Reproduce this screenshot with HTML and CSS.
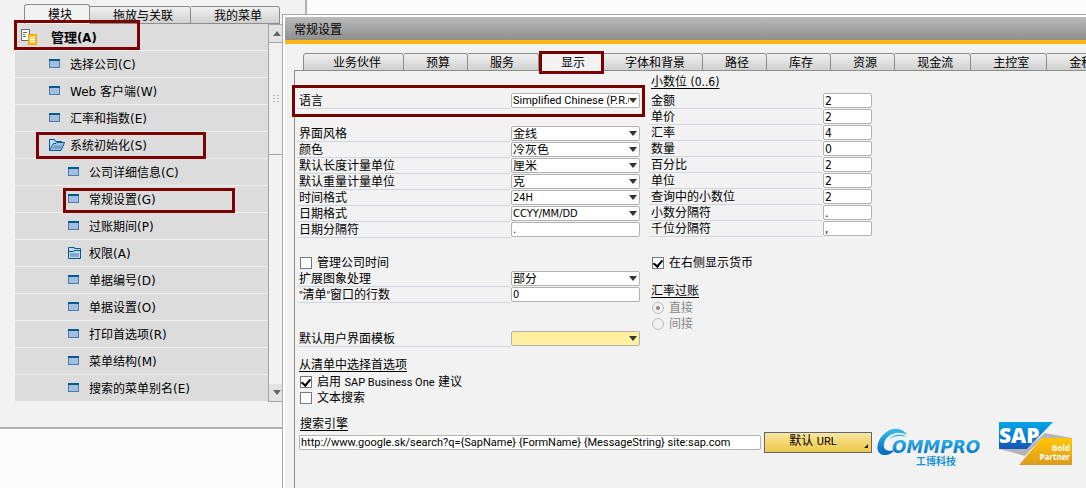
FILE: index.html
```html
<!DOCTYPE html>
<html lang="zh-CN">
<head>
    <meta charset="UTF-8">
    <title>常规设置</title>
    <link rel="stylesheet" href="styles.css">
</head>
<body>

<!-- icons used in the menu tree -->
<svg class="sprite" aria-hidden="true">
    <symbol id="icon-window" viewBox="0 0 16 14">
        <rect x="0.5" y="2.5" width="10" height="8" fill="#a3bfdf" stroke="#4f79ac"/>
        <rect x="0" y="2" width="11" height="2" fill="#005a8c"/>
    </symbol>
    <symbol id="icon-open" viewBox="0 0 16 14">
        <path d="M0.5 12.5V1.5H5.5L6.5 3.5H12.5V5" fill="#c5d9ec" stroke="#005a8c"/>
        <path d="M0.5 12.5L4.5 5.5H7L8 4.5H15.5L12 12.5Z" fill="#a3c4e2" stroke="#005a8c"/>
        <path d="M3 11L5.5 7.5H13L11.5 11Z" fill="#6f9fcb"/>
    </symbol>
    <symbol id="icon-folder" viewBox="0 0 16 14">
        <path d="M0.5 1.5H6.5V2.5H12.5V12.5H0.5Z" fill="#c5d9ec" stroke="#005a8c"/>
        <path d="M1 5.5H5L6.5 4.5H12" fill="none" stroke="#005a8c"/>
        <rect x="2" y="7" width="9" height="4" fill="#7fa9d1"/>
    </symbol>
</svg>

<div class="desktop">
    <nav class="menu-window">
        <div class="tabs menu-tabs">
            <button class="tab active" type="button">模块</button>
            <button class="tab" type="button">拖放与关联</button>
            <button class="tab" type="button">我的菜单</button>
        </div>
        <div class="menu-body">
            <ul class="tree">
                <li class="module marked">
                    <svg width="18" height="18" viewBox="0 0 18 18">
                        <path d="M1.5 1.5H9.5V12.5H1.5Z" fill="#fff" stroke="#666"/>
                        <path d="M3 4.5H7M3 6.5H5M3 8.5H6" stroke="#666"/>
                        <rect x="8" y="6" width="9" height="11" fill="#f5a800"/>
                        <rect x="9.500" y="7.500" width="6" height="8" fill="#ffd24d"/>
                        <path d="M10 9.5H15M10 11.5H15M10 13.5H15" stroke="#fff"/>
                    </svg>
                    <a href="#">管理(A)</a>
                </li>
                <li><svg class="icon"><use href="#icon-window"/></svg><a href="#">选择公司(C)</a></li>
                <li><svg class="icon"><use href="#icon-window"/></svg><a href="#">Web 客户端(W)</a></li>
                <li><svg class="icon"><use href="#icon-window"/></svg><a href="#">汇率和指数(E)</a></li>
                <li class="marked"><svg class="icon"><use href="#icon-open"/></svg><a href="#">系统初始化(S)</a></li>
                <li class="sub"><svg class="icon"><use href="#icon-window"/></svg><a href="#">公司详细信息(C)</a></li>
                <li class="sub marked"><svg class="icon"><use href="#icon-window"/></svg><a href="#">常规设置(G)</a></li>
                <li class="sub"><svg class="icon"><use href="#icon-window"/></svg><a href="#">过账期间(P)</a></li>
                <li class="sub"><svg class="icon"><use href="#icon-folder"/></svg><a href="#">权限(A)</a></li>
                <li class="sub"><svg class="icon"><use href="#icon-window"/></svg><a href="#">单据编号(D)</a></li>
                <li class="sub"><svg class="icon"><use href="#icon-window"/></svg><a href="#">单据设置(O)</a></li>
                <li class="sub"><svg class="icon"><use href="#icon-window"/></svg><a href="#">打印首选项(R)</a></li>
                <li class="sub"><svg class="icon"><use href="#icon-window"/></svg><a href="#">菜单结构(M)</a></li>
                <li class="sub"><svg class="icon"><use href="#icon-window"/></svg><a href="#">搜索的菜单别名(E)</a></li>
            </ul>
            <div class="scrollbar">
                <div class="arrow up"></div>
                <div class="thumb">
                    <svg width="7" height="8" viewBox="0 0 7 8"><path d="M0 0.5H2M4 0.5H6M0 3.5H2M4 3.5H6M0 6.5H2M4 6.5H6" stroke="#b5b5b5"/></svg>
                </div>
                <div class="arrow down"></div>
            </div>
        </div>
    </nav>

    <main class="settings-window">
        <h1>常规设置</h1>
        <div class="tabs settings-tabs">
            <button class="tab first" type="button">业务伙伴</button>
            <button class="tab" type="button">预算</button>
            <button class="tab wide" type="button">服务</button>
            <button class="tab active marked" type="button">显示</button>
            <button class="tab" type="button">字体和背景</button>
            <button class="tab" type="button">路径</button>
            <button class="tab" type="button">库存</button>
            <button class="tab" type="button">资源</button>
            <button class="tab" type="button">现金流</button>
            <button class="tab" type="button">主控室</button>
            <button class="tab" type="button">金税</button>
        </div>

        <form class="panel">
            <div class="columns">
                <div class="left">
                    <div class="row language marked">
                        <label for="lang">语言</label>
                        <span class="pick"><select id="lang"><option>Simplified Chinese (P.R.China)</option></select></span>
                    </div>
                    <div class="row">
                        <label for="skin">界面风格</label>
                        <span class="pick cjk"><select id="skin"><option>金线</option></select></span>
                    </div>
                    <div class="row">
                        <label for="color">颜色</label>
                        <span class="pick cjk"><select id="color"><option>冷灰色</option></select></span>
                    </div>
                    <div class="row">
                        <label for="length">默认长度计量单位</label>
                        <span class="pick cjk"><select id="length"><option>厘米</option></select></span>
                    </div>
                    <div class="row">
                        <label for="weight">默认重量计量单位</label>
                        <span class="pick cjk"><select id="weight"><option>克</option></select></span>
                    </div>
                    <div class="row">
                        <label for="time">时间格式</label>
                        <span class="pick"><select id="time"><option>24H</option></select></span>
                    </div>
                    <div class="row">
                        <label for="date">日期格式</label>
                        <span class="pick"><select id="date"><option>CCYY/MM/DD</option></select></span>
                    </div>
                    <div class="row">
                        <label for="datesep">日期分隔符</label>
                        <input type="text" id="datesep" value=".">
                    </div>

                    <div class="check block">
                        <input type="checkbox" id="cotime"><label for="cotime">管理公司时间</label>
                    </div>
                    <div class="row">
                        <label for="image">扩展图象处理</label>
                        <span class="pick cjk"><select id="image"><option>部分</option></select></span>
                    </div>
                    <div class="row">
                        <label for="lines"><span class="latin">"</span>清单<span class="latin">"</span>窗口的行数</label>
                        <input type="text" id="lines" value="0">
                    </div>
                    <div class="row template">
                        <label for="template">默认用户界面模板</label>
                        <span class="pick"><select id="template"><option></option></select></span>
                    </div>

                    <h2 class="pref">从清单中选择首选项</h2>
                    <div class="check">
                        <input type="checkbox" id="suggest" checked><label for="suggest">启用 <span class="latin">SAP Business One</span> 建议</label>
                    </div>
                    <div class="check">
                        <input type="checkbox" id="textsearch"><label for="textsearch">文本搜索</label>
                    </div>
                </div>

                <div class="right">
                    <h2>小数位 (0..6)</h2>
                    <div class="row">
                        <label for="amount">金额</label>
                        <input type="text" id="amount" value="2">
                    </div>
                    <div class="row">
                        <label for="price">单价</label>
                        <input type="text" id="price" value="2">
                    </div>
                    <div class="row">
                        <label for="rate">汇率</label>
                        <input type="text" id="rate" value="4">
                    </div>
                    <div class="row">
                        <label for="qty">数量</label>
                        <input type="text" id="qty" value="0">
                    </div>
                    <div class="row">
                        <label for="percent">百分比</label>
                        <input type="text" id="percent" value="2">
                    </div>
                    <div class="row">
                        <label for="unit">单位</label>
                        <input type="text" id="unit" value="2">
                    </div>
                    <div class="row">
                        <label for="query">查询中的小数位</label>
                        <input type="text" id="query" value="2">
                    </div>
                    <div class="row">
                        <label for="decsep">小数分隔符</label>
                        <input type="text" id="decsep" value=".">
                    </div>
                    <div class="row">
                        <label for="thousep">千位分隔符</label>
                        <input type="text" id="thousep" value=",">
                    </div>

                    <div class="check block">
                        <input type="checkbox" id="currency" checked><label for="currency">在右侧显示货币</label>
                    </div>

                    <h2 class="posting">汇率过账</h2>
                    <div class="check disabled">
                        <input type="radio" name="posting" id="direct" checked disabled><label for="direct">直接</label>
                    </div>
                    <div class="check disabled">
                        <input type="radio" name="posting" id="indirect" disabled><label for="indirect">间接</label>
                    </div>
                </div>
            </div>

            <div class="bottom">
                <div class="search">
                    <h2><label for="engine">搜索引擎</label></h2>
                    <div class="search-row">
                        <input type="text" id="engine" value="http://www.google.sk/search?q={SapName} {FormName} {MessageString} site:sap.com">
                        <button class="url-button" type="button">默认 <span class="latin">URL</span></button>
                    </div>
                </div>
                <svg class="commpro" width="108" height="48" viewBox="0 0 108 48" role="img" aria-label="COMMPRO">
                    <defs>
                        <linearGradient id="blue" x1="0" y1="0" x2="0" y2="1">
                            <stop offset="0" stop-color="#35bdea"/>
                            <stop offset="1" stop-color="#0067b8"/>
                        </linearGradient>
                    </defs>
                    <path d="M31 13C26 5 15 5 8 12C-1 20 -1 33 9 33C13 33 16 31 19 28C12 30 7 28 8 22C9 14 20 7 31 13Z" fill="url(#blue)"/>
                    <path d="M13 17C18 12 25 11 31 15C25 13 18 14 13 17Z" fill="#35bdea"/>
                    <text class="commpro-name" x="16" y="31" fill="url(#blue)">OMMPRO</text>
                    <text class="commpro-sub" x="40" y="43" fill="#1494d6">工博科技</text>
                </svg>
                <svg class="sap" width="73" height="43" viewBox="0 0 73 43" role="img" aria-label="SAP Gold Partner">
                    <defs>
                        <linearGradient id="sapblue" x1="0" y1="0" x2="0" y2="1">
                            <stop offset="0" stop-color="#00a7e7"/>
                            <stop offset="1" stop-color="#1455b4"/>
                        </linearGradient>
                        <linearGradient id="gold" x1="0" y1="0" x2="0" y2="1">
                            <stop offset="0" stop-color="#ffc800"/>
                            <stop offset="1" stop-color="#dd9a20"/>
                        </linearGradient>
                    </defs>
                    <path d="M46 11L73 16H43L26 34L0 27H28Z" fill="#b5b5b7"/>
                    <path d="M0 0H54L28 27H0Z" fill="url(#sapblue)"/>
                    <path d="M43 16H73V43H20Z" fill="url(#gold)"/>
                    <text class="sap-name" x="0" y="21" fill="#fff">SAP</text>
                    <text class="sap-gold" x="71" y="29" fill="#fff">Gold</text>
                    <text class="sap-gold" x="71" y="38" fill="#fff">Partner</text>
                </svg>
            </div>
        </form>
    </main>
</div>

</body>
</html>
```
FILE: styles.css
```css
* {
    box-sizing: border-box;
}

body {
    margin: 0;
    background: #fcfcfc;
    color: #000;
    font-family: "DejaVu Sans Condensed", "Noto Sans CJK SC", sans-serif;
    font-size: 12px;
    line-height: 16px;
}

button, input, select {
    font: inherit;
    color: inherit;
    margin: 0;
}

.sprite {
    position: absolute;
    width: 0;
    height: 0;
}

.latin {
    font-family: Roboto, sans-serif;
    font-size: 11px;
}

.desktop {
    position: relative;
    min-height: 100vh;
    overflow: hidden;
}

/* dark red frames */
.marked {
    position: relative;
}

.marked::before {
    content: "";
    position: absolute;
    border: 3px solid #7b0000;
    pointer-events: none;
    z-index: 2;
}

/* tabs */
.tabs {
    display: flex;
    align-items: flex-end;
}

.tab {
    flex: none;
    height: 18px;
    padding: 1px 17px 0 22px;
    border: 1px solid #8c8c8c;
    border-left-width: 0;
    border-radius: 0 3px 0 0;
    background: linear-gradient(#f0f0f0, #d0d0d0);
    line-height: 16px;
    white-space: nowrap;
}

.tab:first-child {
    border-left-width: 1px;
    border-radius: 3px 3px 0 0;
}

.tab.active {
    background: #f2f2f2;
    border-bottom-color: #f2f2f2;
}

/* main menu */
.menu-window {
    position: absolute;
    top: 0;
    left: 0;
    width: 307px;
    padding: 4px 20px 25px 15px;
    background: #f2f2f2;
    border-right: 2px solid #b0b0b0;
    border-bottom: 2px solid #b0b0b0;
}

.menu-tabs {
    padding-left: 9px;
}

.menu-tabs .tab {
    padding-left: 23px;
}

.menu-tabs .active {
    height: 20px;
}

.menu-body {
    display: flex;
}

.tree {
    flex: 1;
    margin: 0;
    padding: 0;
    list-style: none;
    font-family: "DejaVu Sans", "Noto Sans CJK SC", sans-serif;
}

.tree li {
    display: flex;
    align-items: center;
    gap: 5px;
    height: 27px;
    padding-left: 34px;
    background: #dcdcdc;
    border-bottom: 1px solid #f2f2f2;
}

.tree .sub {
    padding-left: 53px;
}

.tree .module {
    gap: 13px;
    padding-left: 5px;
    font-family: "DejaVu Sans Condensed", "Noto Sans CJK SC", sans-serif;
    font-size: 13px;
    font-weight: bold;
}

.tree a {
    padding-top: 2px;
    color: #000;
    text-decoration: none;
}

.tree .marked::before {
    inset: 0 62px -1px 21px;
}

.tree .module::before {
    inset: -4px 128px 0 -1px;
}

.tree .sub::before {
    inset: 2px 33px -1px 48px;
}

.icon {
    width: 16px;
    height: 14px;
}

.scrollbar {
    display: flex;
    flex-direction: column;
    width: 17px;
    border: 1px solid #a5a5a5;
    background: #f2f2f2;
}

.arrow {
    display: flex;
    align-items: center;
    justify-content: center;
    height: 17px;
    background: #e3e3e3;
}

.arrow::before {
    content: "";
    border: 4px solid transparent;
}

.up::before {
    border-top-width: 0;
    border-bottom: 5px solid #666;
}

.down {
    margin-top: auto;
}

.down::before {
    border-bottom-width: 0;
    border-top: 5px solid #666;
}

.thumb {
    display: flex;
    align-items: center;
    justify-content: center;
    height: 113px;
    border: 1px solid #a5a5a5;
    border-width: 1px 0;
    background: #f0f0f0;
}

/* settings */
.settings-window {
    position: absolute;
    top: 14px;
    right: 0;
    bottom: 0;
    left: 282px;
    display: flex;
    flex-direction: column;
    padding: 2px 0 0 2px;
    border: 1px solid #a8a8a8;
    border-width: 1px 0 0 1px;
    background: #f2f2f2;
    box-shadow: inset 2px 2px #fff;
    overflow: hidden;
}

h1 {
    margin: 0;
    padding: 5px 9px 2px;
    border-bottom: 4px solid #fdb913;
    background: linear-gradient(#bababa, #8e8e8e);
    font-size: 12px;
    font-weight: normal;
    line-height: 16px;
}

.settings-tabs {
    padding: 9px 0 0 18px;
}

.settings-tabs .first {
    padding-right: 22px;
    padding-left: 29px;
}

.settings-tabs .wide {
    padding-right: 24px;
}

.settings-tabs .marked::before {
    inset: -3px -2px -4px 0;
}

.panel {
    flex: 1;
    margin: -1px 0 0 9px;
    padding: 3px 0 0 2px;
    border: 1px solid #8c8c8c;
    border-width: 1px 0 0 1px;
}

.columns {
    display: flex;
    gap: 9px;
}

.left {
    width: 343px;
    padding-top: 19px;
}

.right {
    width: 223px;
}

.row {
    display: flex;
    height: 16px;
}

.row label {
    flex: 1;
    padding-left: 2px;
    border-bottom: 1px solid #d0d6de;
    line-height: 17px;
    white-space: nowrap;
}

.left .row input, .pick {
    width: 129px;
}

.right .row input {
    width: 49px;
}

input[type=text], select {
    height: 15px;
    padding: 0 1px;
    border: 1px solid #b2b2b2;
    border-radius: 2px;
    background: #fff;
    font-size: 11px;
    line-height: 13px;
}

.right input[type=text] {
    font-size: 12px;
}

#lang, #engine {
    font-family: Roboto, sans-serif;
}

.pick {
    position: relative;
    display: block;
}

.pick select {
    display: block;
    width: 100%;
    padding-right: 10px;
    appearance: none;
}

.pick.cjk select {
    padding-top: 1px;
    font-size: 12px;
}

.pick::after {
    content: "";
    position: absolute;
    top: 5px;
    right: 3px;
    border: 4px solid transparent;
    border-top: 5px solid #333;
    border-bottom-width: 0;
    pointer-events: none;
}

.language {
    margin-bottom: 17px;
}

.language::before {
    inset: -8px -5px;
}

.template {
    margin-top: 28px;
}

.template select {
    background: #ffef9e;
}

h2 {
    width: fit-content;
    margin: 0 0 0 2px;
    font-size: 12px;
    font-weight: normal;
    line-height: 16px;
    text-decoration: underline;
    text-underline-offset: 2px;
}

.right h2 {
    margin-bottom: 3px;
}

.pref {
    margin: 10px 0 1px 2px;
}

.right .posting {
    margin: 12px 0 1px 2px;
}

.check {
    display: flex;
    align-items: center;
    gap: 5px;
    height: 16px;
    padding-left: 3px;
}

.block {
    margin-top: 17px;
}

.right .block {
    margin-top: 18px;
}

.check input {
    display: grid;
    place-items: center;
    width: 12px;
    height: 12px;
    border: 1px solid #777;
    background: #fff;
    appearance: none;
}

.check input[type=checkbox]:checked::before {
    content: "";
    width: 4px;
    height: 7px;
    margin-bottom: 2px;
    border: 2px solid #000;
    border-width: 0 2px 2px 0;
    transform: rotate(40deg);
}

.check input[type=radio] {
    border-color: #bbb;
    border-radius: 50%;
    background: #f2f2f2;
}

.check input[type=radio]:checked::before {
    content: "";
    width: 4px;
    height: 4px;
    border-radius: 50%;
    background: #888;
}

.disabled {
    color: #888;
}

.bottom {
    display: flex;
    align-items: flex-start;
    margin-top: 10px;
}

.search {
    width: 575px;
    padding-left: 2px;
}

.search h2 {
    margin-left: 1px;
}

.search-row {
    display: flex;
    align-items: center;
    gap: 3px;
}

.search-row input {
    flex: 1;
}

.url-button {
    position: relative;
    width: 108px;
    height: 21px;
    padding: 0 10px 2px 0;
    border: 1px solid #666;
    background: linear-gradient(#f6e6a8, #f4d66c 50%, #ecc850);
}

.url-button::after {
    content: "";
    position: absolute;
    right: 3px;
    bottom: 4px;
    border: 2px solid #222;
    border-top-color: transparent;
    border-left-color: transparent;
}

.commpro, .sap {
    flex: none;
    margin-top: 6px;
}

.commpro {
    margin-left: 4px;
}

.sap {
    margin-left: 15px;
}

.commpro-name {
    font: italic bold 17px "DejaVu Sans", sans-serif;
}

.commpro-sub {
    font: bold 10px "Noto Sans CJK SC", sans-serif;
}

.sap-name {
    font: 800 21px "Open Sans", sans-serif;
}

.sap-gold {
    font: bold 8px "Open Sans", sans-serif;
    text-anchor: end;
}
```
